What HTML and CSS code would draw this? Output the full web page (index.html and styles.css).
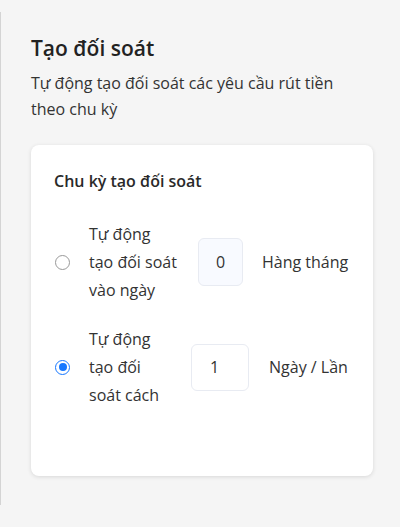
FILE: index.html
```html
<!DOCTYPE html>
<html lang="vi">
<head>
<meta charset="utf-8">
<title>Tạo đối soát</title>
<link rel="stylesheet" href="styles.css">
</head>
<body>
<div class="page">
  <h1 class="title">Tạo đối soát</h1>
  <p class="desc">Tự động tạo đối soát các yêu cầu rút tiền theo chu kỳ</p>
  <div class="card">
    <div class="card-title">Chu kỳ tạo đối soát</div>
    <div class="row">
      <span class="radio"></span>
      <span class="label label-1">Tự động tạo đối soát vào ngày</span>
      <span class="input input-1 disabled">0</span>
      <span class="unit unit-1">Hàng tháng</span>
    </div>
    <div class="row">
      <span class="radio checked"></span>
      <span class="label label-2">Tự động tạo đối soát cách</span>
      <span class="input input-2">1</span>
      <span class="unit unit-2">Ngày / Lần</span>
    </div>
  </div>
</div>
</body>
</html>
```
FILE: styles.css
```css
* { box-sizing: border-box; }
html, body { margin: 0; padding: 0; }
body {
  background: #f5f5f5;
  font-family: "Open Sans", "Noto Sans", sans-serif;
  color: #333;
  width: 400px;
  height: 527px;
  overflow: hidden;
}
.page {
  margin-top: 12px;
  height: 493px;
  border-left: 1px solid #d4d4d4;
  padding: 22px 27px 29px 30px;
}
.title {
  margin: 0;
  font-size: 21px;
  line-height: 28px;
  font-weight: 600;
  color: #222;
}
.desc {
  margin: 8px 0 0;
  max-width: 338px;
  font-size: 16px;
  line-height: 26px;
  color: #333;
}
.card {
  margin-top: 23px;
  background: #fff;
  border-radius: 8px;
  box-shadow: 0 1px 4px rgba(0, 0, 0, 0.12);
  padding: 24px 24px 0 23px;
  height: 331px;
}
.card-title {
  font-size: 16px;
  line-height: 24px;
  font-weight: 600;
  color: #2a2a2a;
  margin-bottom: 27px;
}
.row {
  display: flex;
  align-items: center;
  margin-bottom: 21px;
  font-size: 16px;
  line-height: 28px;
  color: #333;
}
.radio {
  flex: 0 0 15px;
  width: 15px;
  height: 15px;
  border: 1px solid #999;
  border-radius: 50%;
  margin-left: 1px;
  background: #fff;
  display: flex;
  align-items: center;
  justify-content: center;
}
.radio.checked {
  border: 1.5px solid #1677ff;
}
.radio.checked::after {
  content: "";
  width: 8px;
  height: 8px;
  border-radius: 50%;
  background: #1677ff;
}
.label {
  margin-left: 19px;
  flex: 0 0 auto;
}
.label-1 { width: 88px; margin-right: 21px; }
.label-2 { width: 80px; margin-right: 22px; }
.input {
  display: flex;
  align-items: center;
  justify-content: center;
  flex: 0 0 auto;
  height: 48px;
  border: 1px solid #e8ebf2;
  border-radius: 6px;
  background: #fff;
  font-size: 16px;
  color: #333;
}
.input.disabled { background: #f8faff; }
.input-1 { width: 45px; }
.input-2 { width: 58px; height: 47px; justify-content: flex-start; padding-left: 18px; }
.unit { white-space: nowrap; }
.unit-1 { margin-left: 19px; }
.unit-2 { margin-left: 20px; }
```
